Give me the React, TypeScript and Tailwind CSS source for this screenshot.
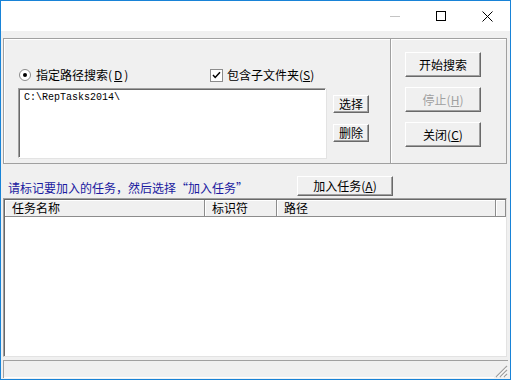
import React from 'react';

const U = ({ c }: { c: string }) => <span className="underline underline-offset-[1px]">{c}</span>;

function Btn({ children, className = '', disabled = false }: { children: React.ReactNode; className?: string; disabled?: boolean }) {
  return (
    <div
      className={`flex items-center justify-center bg-[#f0f0f0] border border-t-white border-l-white border-b-[#696969] border-r-[#696969] shadow-[inset_-1px_-1px_0_#a0a0a0] text-[12px] leading-none ${disabled ? 'text-[#a0a0a0]' : 'text-black'} ${className}`}
    >
      {children}
    </div>
  );
}

function Radio() {
  return (
    <div className="w-[12px] h-[12px] rounded-full border border-[#8c8c8c] bg-white flex items-center justify-center shrink-0">
      <div className="w-[4px] h-[4px] rounded-full bg-black" />
    </div>
  );
}

function Check() {
  return (
    <div className="w-[13px] h-[13px] border border-[#8c8c8c] bg-white flex items-center justify-center shrink-0">
      <svg width="9" height="9" viewBox="0 0 9 9">
        <path d="M1 4 L3.2 6.4 L8 1.2" stroke="black" strokeWidth="1.5" fill="none" />
      </svg>
    </div>
  );
}

function HeaderCell({ label, className = '' }: { label: string; className?: string }) {
  return (
    <div className={`h-full flex items-center border-l border-l-white border-r border-r-[#8c8c8c] pl-[6px] text-[12px] leading-none text-black ${className}`}>
      {label}
    </div>
  );
}

export default function App() {
  return (
    <div className="w-[511px] h-[380px] border border-[#1883d7] bg-[#f0f0f0] flex flex-col font-['Noto_Sans_CJK_SC',sans-serif] overflow-hidden">
      {/* Title bar */}
      <div className="h-[30px] bg-white flex justify-end shrink-0">
        <div className="w-[46px] h-full flex items-center justify-center">
          <div className="w-[10px] h-[1px] bg-[#c4c4c4]" />
        </div>
        <div className="w-[46px] h-full flex items-center justify-center">
          <div className="w-[10px] h-[10px] border border-black" />
        </div>
        <div className="w-[46px] h-full flex items-center justify-center">
          <svg width="11" height="11" viewBox="0 0 11 11">
            <path d="M0.5 0.5 L10.5 10.5 M10.5 0.5 L0.5 10.5" stroke="black" strokeWidth="1" />
          </svg>
        </div>
      </div>

      {/* Client */}
      <div className="flex-1 flex flex-col">
        {/* Top group */}
        <div className="mt-[7px] ml-[2px] h-[126px] w-[504px] flex shrink-0">
          <div className="w-[387px] h-full border border-r-0 border-[#a0a0a0] shadow-[inset_1px_1px_0_#fff] flex flex-col">
            <div className="mt-[28px] ml-[15px] h-[16px] flex items-center text-[12px] leading-none text-black">
              <div className="w-[191px] flex items-center gap-[5px]">
                <Radio />
                <span>
                  指定路径搜索(<span className="mx-[2px]"><U c="D" /></span>)
                </span>
              </div>
              <div className="flex items-center gap-[4px]">
                <Check />
                <span>
                  包含子文件夹(<U c="S" />)
                </span>
              </div>
            </div>
            <div className="mt-[5px] flex">
              <div className="ml-[14px] w-[308px] h-[70px] bg-white border border-t-[#a0a0a0] border-l-[#a0a0a0] border-b-white border-r-white shadow-[inset_1px_1px_0_#696969,1px_1px_0_#e3e3e3] pl-[5px] pt-[3px] font-['Liberation_Mono',monospace] text-[10px] leading-[12px] text-black">
                C:\RepTasks2014\
              </div>
              <div className="ml-[7px] pt-[7px] flex flex-col gap-[11px]">
                <Btn className="w-[36px] h-[18px]">选择</Btn>
                <Btn className="w-[36px] h-[18px]">删除</Btn>
              </div>
            </div>
          </div>
          <div className="w-[117px] h-full border border-[#a0a0a0] shadow-[inset_1px_1px_0_#fff] flex flex-col pl-[14px] pt-[13px] gap-[10px]">
            <Btn className="w-[76px] h-[25px]">开始搜索</Btn>
            <Btn className="w-[76px] h-[25px]" disabled>
              停止(<U c="H" />)
            </Btn>
            <Btn className="w-[76px] h-[25px]">
              关闭(<U c="C" />)
            </Btn>
          </div>
        </div>

        {/* Hint row */}
        <div className="mt-[12px] h-[20px] flex items-center shrink-0">
          <div className="w-[296px] pl-[7px] pt-[4px] text-[12px] leading-none text-[#1a1aa0]">
            请标记要加入的任务，然后选择“加入任务”
          </div>
          <Btn className="w-[96px] h-[20px]">
            加入任务(<U c="A" />)
          </Btn>
        </div>

        {/* List view */}
        <div className="mt-[2px] ml-[2px] w-[504px] h-[159px] border border-t-[#a0a0a0] border-l-[#a0a0a0] border-b-[#e3e3e3] border-r-[#e3e3e3] shadow-[inset_1px_1px_0_#696969] bg-white flex flex-col pl-[1px] pt-[1px] shrink-0">
          <div className="h-[17px] flex bg-[#f0f0f0] border-b border-b-[#8c8c8c] shadow-[inset_0_1px_0_#fff]">
            <HeaderCell label="任务名称" className="w-[200px]" />
            <HeaderCell label="标识符" className="w-[72px]" />
            <HeaderCell label="路径" className="w-[219px]" />
            <HeaderCell label="" className="flex-1" />
          </div>
          <div className="flex-1 bg-white" />
        </div>

        {/* Status bar */}
        <div className="mt-[3px] ml-[2px] w-[505px] h-[18px] border-t border-l border-[#a0a0a0] flex shrink-0">
          <div className="flex-1 border-b border-b-white" />
          <div className="w-[14px] h-full flex items-end justify-end">
            <svg width="13" height="13" viewBox="0 0 13 13">
              <path d="M12 1 L1 12 M12 5 L5 12 M12 9 L9 12" stroke="#a0a0a0" strokeWidth="1.2" />
              <path d="M12 2.5 L2.5 12 M12 6.5 L6.5 12 M12 10.5 L10.5 12" stroke="#fff" strokeWidth="1" />
            </svg>
          </div>
        </div>
      </div>
    </div>
  );
}
